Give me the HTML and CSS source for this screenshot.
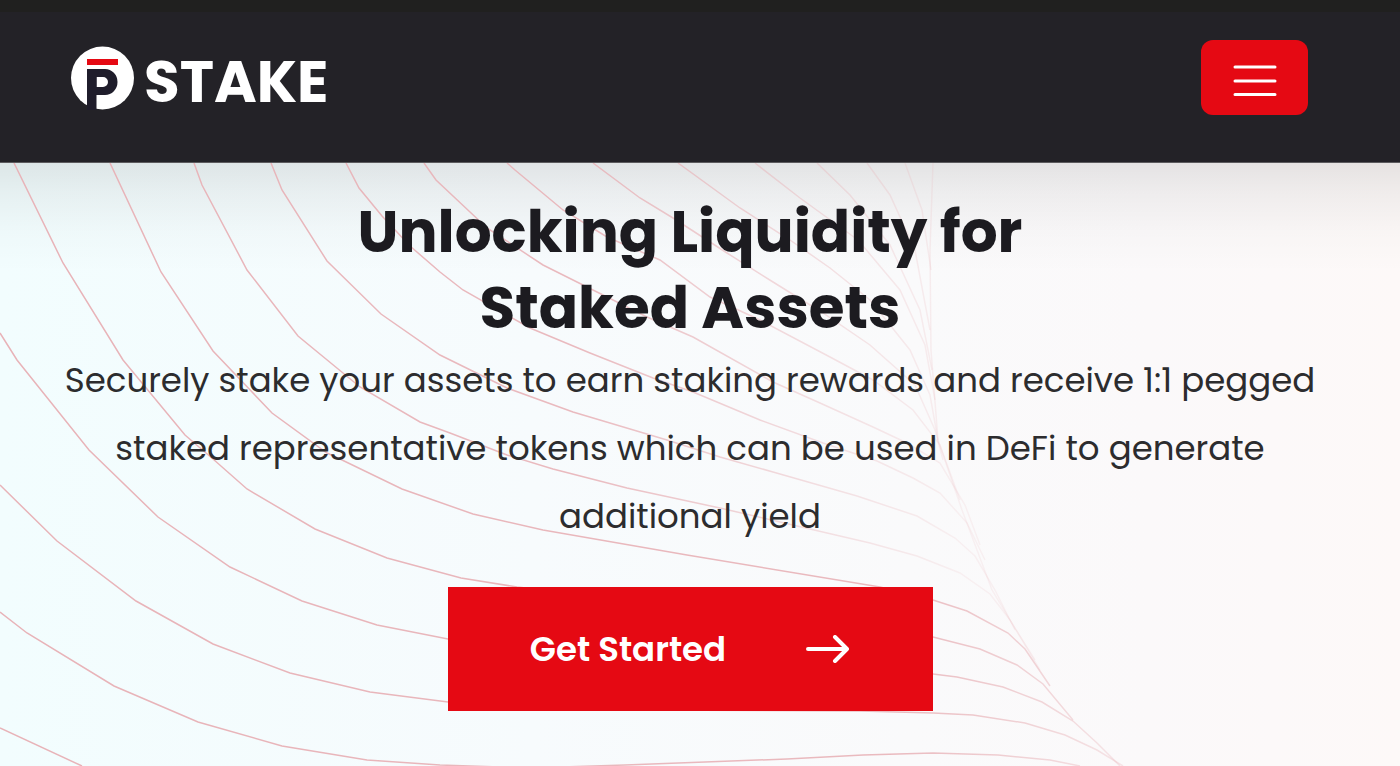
FILE: index.html
```
<!DOCTYPE html>
<html lang="en">
<head>
  <meta charset="UTF-8">
  <meta name="viewport" content="width=device-width, initial-scale=1.0">
  <title>pSTAKE</title>
  <link rel="stylesheet" href="styles.css">
</head>
<body>
  <header class="navbar">
    <a class="logo" href="#" aria-label="pSTAKE home">
      <svg class="logo-mark" viewBox="0 0 64 64" aria-hidden="true">
        <circle cx="32.5" cy="32" r="31.5" fill="#fff"/>
        <rect x="17" y="13" width="31" height="6" fill="#e50913"/>
        <rect x="17" y="23" width="9.5" height="41" fill="#1f1d2b"/>
        <path fill="#1f1d2b" fill-rule="evenodd" d="M17 23H35a12.5 13 0 0 1 0 26H26V23zM26.5 31V41H33a5 5 0 0 0 0-10z"/>
      </svg>
      <span class="logo-text">STAKE</span>
    </a>
    <button class="menu-btn" type="button" aria-label="Open menu">
      <svg viewBox="0 0 44 32" aria-hidden="true">
        <path d="M2 2h40M2 16h40M2 29.500h40"/>
      </svg>
    </button>
  </header>

  <main class="hero">
    <svg class="waves" viewBox="0 163 1400 603" preserveAspectRatio="xMinYMin slice" aria-hidden="true">
      <defs>
        <linearGradient id="fadeTop" gradientUnits="userSpaceOnUse" x1="0" y1="0" x2="960" y2="0">
          <stop offset="0" stop-color="#e8b3b8"/>
          <stop offset="0.6" stop-color="#e8b3b8" stop-opacity="0.9"/>
          <stop offset="0.85" stop-color="#e8b3b8" stop-opacity="0.4"/>
          <stop offset="1" stop-color="#e8b3b8" stop-opacity="0.15"/>
        </linearGradient>
        <linearGradient id="fadeBottom" gradientUnits="userSpaceOnUse" x1="0" y1="0" x2="1120" y2="0">
          <stop offset="0" stop-color="#e8b3b8"/>
          <stop offset="0.8" stop-color="#e8b3b8" stop-opacity="0.9"/>
          <stop offset="1" stop-color="#e8b3b8" stop-opacity="0.3"/>
        </linearGradient>
      </defs>
      <g stroke="url(#fadeTop)">
        <path d="M194 163L202 185 247 270 298 336 360 387 420 422 450 433 507 455 553 469 627 488 720 508 797 526 870 543 917 556 960 573 990 594 1010 620 1035 660"/>
        <path d="M271 163L282 190 327 261 381 314 440 355 507 388 573 412 667 440 720 457 773 472 857 496 917 516 955 538 975 556 995 590 1015 630"/>
        <path d="M346 163L359 188 382 216 410 246 440 272 463 290 530 328 590 353 653 378 693 392 760 420 823 443 877 461 913 478 940 493 967 523 985 560"/>
        <path d="M424 163L436 180 487 228 543 265 597 292 647 317 693 337 773 382 820 403 873 427 907 443 940 463 965 505 980 545"/>
        <path d="M507 163L515 170 563 210 607 237 660 260 710 297 760 320 830 357 873 380 913 410 940 445 960 500"/>
        <path d="M593 163L640 198 673 218 727 253 773 282 823 313 870 345 915 385 935 430 943 460"/>
        <path d="M678 163L740 208 790 240 830 268 870 300 910 350 930 395 938 440"/>
        <path d="M755 163L800 198 858 240 900 290 925 345 935 400"/>
        <path d="M817 163L850 195 890 245 920 310 932 370"/>
        <path d="M867 163L890 195 915 250 930 330"/>
        <path d="M905 163L922 210 931 270"/>
        <path d="M933 163L930 250 931 350 938 440 962 510 992 590 1040 670"/>
      </g>
      <g stroke="url(#fadeBottom)">
        <path d="M14 163L63 263 123 360 185 435 213 459 247 489 315 529 387 558 461 578 517 587 720 610 933 637 980 649 1017 665 1043 684 1073 720"/>
        <path d="M110 163L161 272 213 351 272 413 327 453 340 459 402 489 473 514 543 530 687 555 880 587 933 600 967 611 1008 633 1025 649 1050 686"/>
        <path d="M0 333L17 360 89 450 158 517 230 567 302 601 377 625 448 639 700 661 933 674 957 677 1003 687 1042 702 1073 721 1097 743 1120 766"/>
        <path d="M0 485L57 541 136 601 213 644 290 673 370 692 448 702 640 710 860 711 933 713 973 715 1025 723 1065 735 1097 750 1123 766"/>
        <path d="M0 612L27 633 114 686 198 722 282 746 367 760 440 765 530 768 625 765 705 762 787 759 863 755 933 753 998 755 1050 760 1080 766"/>
        <path d="M0 728L82 766"/>
      </g>
    </svg>

    <div class="hero-content">
      <h1>Unlocking Liquidity for<br>Staked Assets</h1>
      <p>Securely stake your assets to earn staking rewards and receive 1:1 pegged<br>staked representative tokens which can be used in DeFi to generate<br>additional yield</p>
      <a class="start-btn" href="#">
        <span>Get Started</span>
        <svg viewBox="0 0 44 28" aria-hidden="true">
          <path d="M2 14h39M29 2l12 12-12 12"/>
        </svg>
      </a>
    </div>
  </main>
</body>
</html>
```
FILE: styles.css
```
* {
  box-sizing: border-box;
}
body {
  margin: 0;
  min-height: 100vh;
  display: flex;
  flex-direction: column;
  font-family: Poppins, Inter, sans-serif;
  color: #1c1b20;
}
.navbar {
  display: flex;
  justify-content: space-between;
  align-items: flex-start;
  padding: 28px 92px 47px 70px;
  background: #232227;
  border-top: 12px solid #20201f;
  border-bottom: 1px solid #5c5b5e;
}
.logo {
  display: flex;
  align-items: center;
  gap: 10px;
  margin-top: 2px;
  color: #fff;
  text-decoration: none;
}
.logo-mark {
  width: 64px;
  height: 64px;
}
.logo-text {
  font-size: 58px;
  font-weight: 700;
  line-height: 64px;
  padding-top: 8px;
}
.menu-btn {
  display: flex;
  justify-content: center;
  align-items: center;
  width: 107px;
  height: 75px;
  padding: 6px 0 0;
  background: #e50913;
  border: none;
  border-radius: 12px;
  cursor: pointer;
}
.menu-btn svg {
  width: 44px;
  height: 32px;
  fill: none;
  stroke: #fff;
  stroke-width: 3;
  stroke-linecap: round;
}
.hero {
  position: relative;
  flex: 1;
  overflow: hidden;
  padding: 31px 20px 55px 0;
  background:
    linear-gradient(rgba(0, 0, 0, 0.09) 0, rgba(0, 0, 0, 0.05) 30px, rgba(0, 0, 0, 0.015) 70px, transparent 110px),
    linear-gradient(90deg, #f2fdfe 0%, #f7fbfd 38%, #fafafb 65%, #fbf9fa 82%, #fdf9f8 100%);
}
.waves {
  position: absolute;
  top: 0;
  left: 0;
  width: 100%;
  height: 100%;
  fill: none;
  stroke-width: 1.5;
}
.hero-content {
  position: relative;
  display: flex;
  flex-direction: column;
  align-items: center;
  text-align: center;
}
h1 {
  margin: 0;
  font-size: 58px;
  font-weight: 700;
  line-height: 76px;
}
p {
  margin: 0 0 37px;
  font-size: 34px;
  line-height: 68px;
  color: #2c2c2e;
}
.start-btn {
  display: flex;
  justify-content: center;
  align-items: center;
  gap: 80px;
  width: 485px;
  height: 124px;
  background: #e50913;
  color: #fff;
  font-size: 34px;
  font-weight: 600;
  text-decoration: none;
}
.start-btn svg {
  width: 44px;
  height: 28px;
  fill: none;
  stroke: #fff;
  stroke-width: 4;
  stroke-linecap: round;
  stroke-linejoin: round;
}
```
